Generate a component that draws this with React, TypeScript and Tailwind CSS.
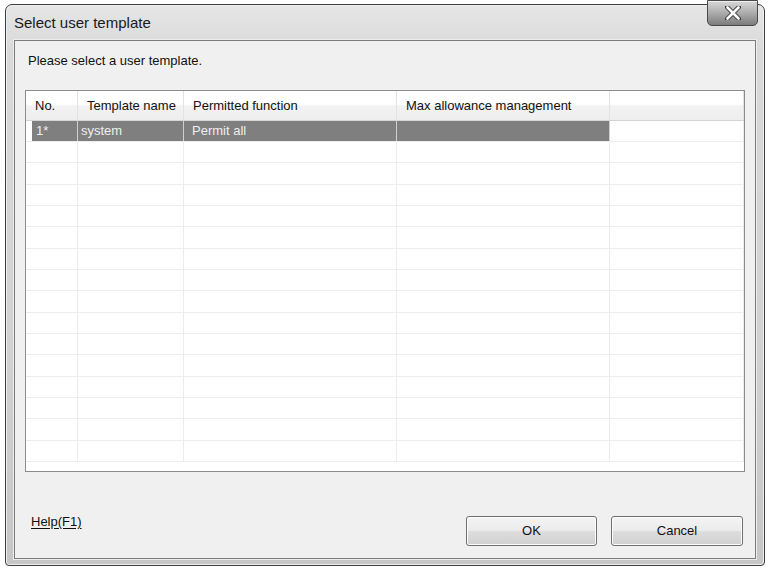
import React from "react"

const columns = [
  { title: "No.", width: "w-[52px]" },
  { title: "Template name", width: "w-[106px]" },
  { title: "Permitted function", width: "w-[213px]" },
  { title: "Max allowance management", width: "w-[213px]" },
  { title: "", width: "flex-1" },
]

const rowHeights = [21, 21, 22, 21, 21, 22, 21, 21, 22, 21, 21, 22, 21, 21, 22, 21]

const templates = [{ no: "1*", name: "system", permit: "Permit all", max: "" }]

const cellPadding = ["pl-[4px]", "pl-[3px]", "pl-[8px]", "pl-[8px]", "pl-[8px]"]

const CloseButton = () => (
  <div className="absolute right-[6px] top-[-5px] w-[51px] h-[26px] rounded-b-[5px] border border-[#4a4a4a] bg-gradient-to-b from-[#d8d8d8] via-[#acacac] to-[#7c7c7c] flex items-center justify-center shadow-[inset_0_1px_0_rgba(255,255,255,0.6)]">
    <svg width="16" height="14" viewBox="0 0 16 14">
      <path d="M2 1 L14 13 M14 1 L2 13" stroke="#3a3a3a" strokeWidth="4.5" strokeLinecap="round" />
      <path d="M2.5 1.5 L13.5 12.5 M13.5 1.5 L2.5 12.5" stroke="#ffffff" strokeWidth="2.6" strokeLinecap="round" />
    </svg>
  </div>
)

const Button = ({ label, width }: { label: string; width: string }) => (
  <button
    className={`${width} h-[30px] rounded-[3px] border border-[#707070] bg-[linear-gradient(to_bottom,#f4f4f4_0%,#ebebeb_48%,#dddddd_52%,#d0d0d0_100%)] shadow-[inset_0_0_0_1px_#fcfcfc] text-[13px] text-[#111]`}
  >
    {label}
  </button>
)

const TemplateTable = () => (
  <div className="mt-[22px] ml-[10px] w-[720px] h-[382px] border border-[#8c8c8c] bg-white overflow-hidden">
    <div className="flex h-[30px] bg-[linear-gradient(to_bottom,#ffffff_0%,#ffffff_45%,#f2f2f2_52%,#eeeeee_100%)] border-b border-[#d5d5d5]">
      {columns.map((col, i) => (
        <div
          key={i}
          className={`${col.width} shrink-0 flex items-center pl-[9px] text-[13px] text-[#111] border-r border-[#e3e3e3]`}
        >
          {col.title}
        </div>
      ))}
    </div>
    {rowHeights.map((h, r) => {
      const t = templates[r]
      const cells = t ? [t.no, t.name, t.permit, t.max, ""] : ["", "", "", "", ""]
      return (
        <div key={r} className="flex border-b border-[#ededed]" style={{ height: h }}>
          {cells.map((text, i) => {
            const selected = !!t && i < 4
            return (
              <div
                key={i}
                className={`${columns[i].width} shrink-0 flex border-r ${
                  selected ? "border-[#cfcfcf]" : "border-[#ececec]"
                } ${selected && i === 0 ? "pl-[6px]" : ""}`}
              >
                <div
                  className={`flex-1 flex items-center text-[13px] ${cellPadding[i]} ${
                    selected ? "bg-[#7f7f7f] text-[#eeeeee]" : ""
                  }`}
                >
                  {text}
                </div>
              </div>
            )
          })}
        </div>
      )
    })}
  </div>
)

export default function App() {
  return (
    <div className="w-[770px] h-[570px] bg-white pt-[4px] pl-[5px] font-['Liberation_Sans',Arial,sans-serif]">
      <div className="relative w-[760px] h-[562px] rounded-t-[7px] rounded-b-[4px] border border-[#3e3e3e] bg-[linear-gradient(to_bottom,#e6e6e6,#d9d9d9_8%,#d2d2d2_60%,#c6c6c6)] shadow-[inset_0_0_0_1px_#efefef] flex flex-col px-[8px] pb-[6px]">
        <div className="h-[35px] flex items-center pt-[1px] text-[15px] text-[#1a1a1a]">
          Select user template
        </div>
        <CloseButton />
        <div className="flex-1 border border-[#7c7c7c] bg-[#f0f0f0] shadow-[0_0_0_1px_#ececec] flex flex-col">
          <div className="mt-[12px] ml-[13px] text-[13px] text-[#111] leading-[15px]">
            Please select a user template.
          </div>
          <TemplateTable />
          <div className="mt-[44px] flex items-start pl-[16px] pr-[12px]">
            <span className="mt-[-2px] leading-[15px] text-[13px] text-[#111] underline underline-offset-2">
              Help(F1)
            </span>
            <div className="ml-auto flex gap-[14px]">
              <Button label="OK" width="w-[131px]" />
              <Button label="Cancel" width="w-[132px]" />
            </div>
          </div>
        </div>
      </div>
    </div>
  )
}
